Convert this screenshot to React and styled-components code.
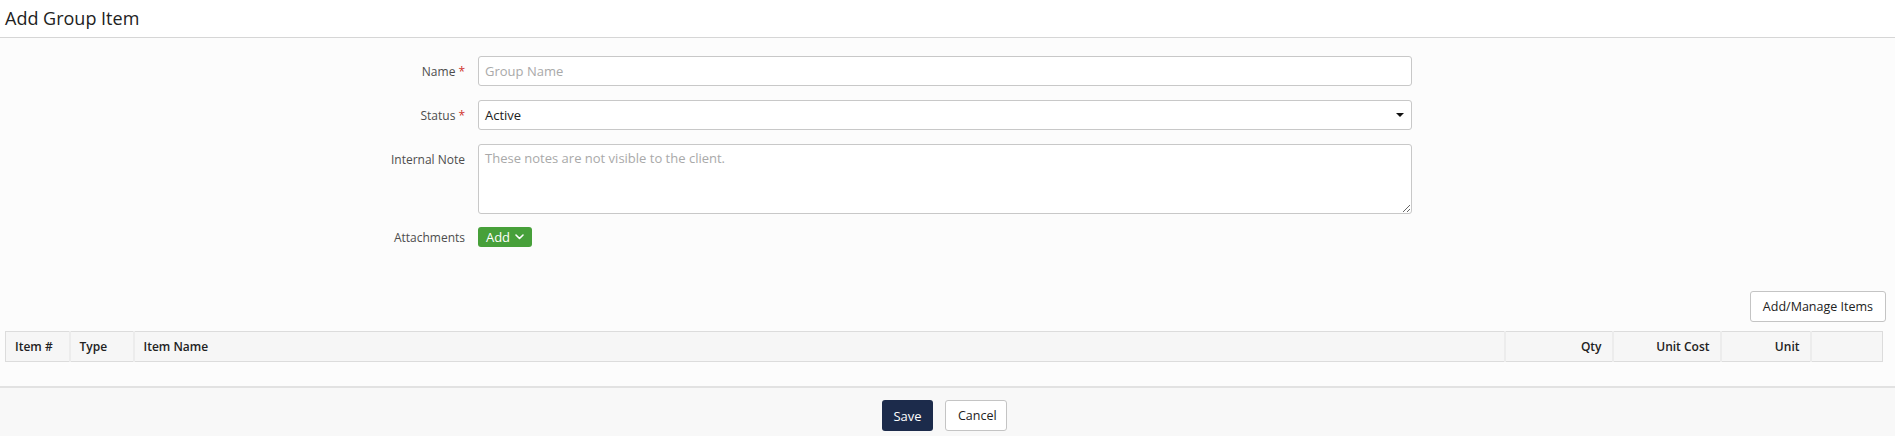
import React from "react";
import styled, { createGlobalStyle } from "styled-components";

const Global = createGlobalStyle`
  html, body { margin: 0; padding: 0; }
  body {
    font-family: "Open Sans", "Noto Sans", sans-serif;
    background: #fcfcfc;
    color: #333;
  }
  * { box-sizing: border-box; }
`;

const Page = styled.div`
  width: 1895px;
  height: 436px;
  display: flex;
  flex-direction: column;
  background: #fcfcfc;
  overflow: hidden;
`;

const Header = styled.header`
  height: 38px;
  background: #fff;
  border-bottom: 1px solid #d6d6d6;
  display: flex;
  align-items: center;
  padding: 0 0 2px 5px;
`;

const Title = styled.h1`
  margin: 0;
  font-size: 18px;
  font-weight: 400;
  color: #222;
`;

const Form = styled.div`
  display: flex;
  flex-direction: column;
  gap: 14px;
  padding-top: 18px;
`;

const Row = styled.div`
  display: grid;
  grid-template-columns: 478px 934px;
  align-items: ${(p) => (p.$top ? "start" : "center")};
`;

const Label = styled.label`
  text-align: right;
  padding-right: 13px;
  font-size: 12px;
  color: #4d4d4d;
  padding-top: ${(p) => (p.$top ? "7px" : "0")};
`;

const Req = styled.span`
  color: #d0312d;
  margin-left: 3px;
`;

const fieldBase = `
  width: 100%;
  border: 1px solid #c8c8c8;
  border-radius: 3px;
  background: #fff;
  font-family: "Open Sans", "Noto Sans", sans-serif;
  font-size: 13px;
  color: #222;
  padding: 0 6px;
  outline: none;
`;

const Input = styled.input`
  ${fieldBase}
  height: 30px;
  &::placeholder { color: #a9a9a9; }
`;

const Select = styled.div`
  ${fieldBase}
  height: 30px;
  display: flex;
  align-items: center;
  justify-content: space-between;
  padding-right: 7px;
`;

const Caret = styled.span`
  width: 0;
  height: 0;
  border-left: 4px solid transparent;
  border-right: 4px solid transparent;
  border-top: 4px solid #111;
`;

const TextArea = styled.textarea`
  ${fieldBase}
  height: 70px;
  padding: 4px 6px;
  display: block;
  resize: vertical;
  &::placeholder { color: #a9a9a9; }
`;

const AttachRow = styled(Row)`
  margin-top: -1px;
`;

const GreenButton = styled.button`
  width: 54px;
  height: 20px;
  border: none;
  border-radius: 3px;
  background: #47a03a;
  color: #fff;
  font-family: "Open Sans", "Noto Sans", sans-serif;
  font-size: 13px;
  display: flex;
  align-items: center;
  justify-content: center;
  gap: 5px;
  padding: 0 0 1px;
`;

const ItemsBar = styled.div`
  display: flex;
  justify-content: flex-end;
  padding: 0 9px 0 0;
  margin-top: 44px;
`;

const OutlineButton = styled.button`
  height: 31px;
  padding: 0 12px;
  border: 1px solid #c4c4c4;
  border-radius: 3px;
  background: #fff;
  color: #222;
  font-family: "Open Sans", "Noto Sans", sans-serif;
  font-size: 12.5px;
  width: ${(p) => p.$w || "auto"};
`;

const TableWrap = styled.div`
  padding: 9px 13px 0 5px;
`;

const Table = styled.table`
  width: 1877px;
  border-collapse: collapse;
  table-layout: fixed;
  border: 1px solid #dcdcdc;
`;

const Th = styled.th`
  height: 30px;
  background: #f6f6f6;
  border-left: 2px solid #ececec;
  font-size: 12px;
  font-weight: 600;
  color: #222;
  text-align: ${(p) => p.$align || "left"};
  padding: 0 ${(p) => (p.$align === "right" ? "10px" : "9px")};
  width: ${(p) => p.$w};
  &:first-child { border-left: none; }
`;

const Spacer = styled.div`
  flex: 1;
`;

const Footer = styled.footer`
  height: 50px;
  border-top: 2px solid #e2e2e2;
  background: #f8f8f8;
  display: flex;
  justify-content: center;
  align-items: flex-start;
  gap: 12px;
  padding: 12px 6px 0 0;
`;

const SaveButton = styled.button`
  width: 51px;
  height: 31px;
  border: none;
  border-radius: 3px;
  background: #1c2b4b;
  color: #fff;
  font-family: "Open Sans", "Noto Sans", sans-serif;
  font-size: 13px;
`;

const Chevron = () => (
  <svg width="9" height="6" viewBox="0 0 9 6" fill="none">
    <path d="M1 1l3.5 3.5L8 1" stroke="#fff" strokeWidth="1.6" strokeLinecap="round" strokeLinejoin="round" />
  </svg>
);

const columns = [
  { label: "Item #", w: "64px" },
  { label: "Type", w: "64px" },
  { label: "Item Name", w: "1371px" },
  { label: "Qty", w: "108px", align: "right" },
  { label: "Unit Cost", w: "108px", align: "right" },
  { label: "Unit", w: "90px", align: "right" },
  { label: "", w: "72px" },
];

export default function App() {
  return (
    <Page>
      <Global />
      <Header>
        <Title>Add Group Item</Title>
      </Header>
      <Form>
        <Row>
          <Label>Name<Req>*</Req></Label>
          <Input placeholder="Group Name" />
        </Row>
        <Row>
          <Label>Status<Req>*</Req></Label>
          <Select>
            <span>Active</span>
            <Caret />
          </Select>
        </Row>
        <Row $top>
          <Label $top>Internal Note</Label>
          <TextArea placeholder="These notes are not visible to the client." />
        </Row>
        <AttachRow>
          <Label>Attachments</Label>
          <div>
            <GreenButton>
              Add <Chevron />
            </GreenButton>
          </div>
        </AttachRow>
      </Form>
      <ItemsBar>
        <OutlineButton>Add/Manage Items</OutlineButton>
      </ItemsBar>
      <TableWrap>
        <Table>
          <thead>
            <tr>
              {columns.map((c, i) => (
                <Th key={i} $w={c.w} $align={c.align}>
                  {c.label}
                </Th>
              ))}
            </tr>
          </thead>
        </Table>
      </TableWrap>
      <Spacer />
      <Footer>
        <SaveButton>Save</SaveButton>
        <OutlineButton $w="62px">Cancel</OutlineButton>
      </Footer>
    </Page>
  );
}
